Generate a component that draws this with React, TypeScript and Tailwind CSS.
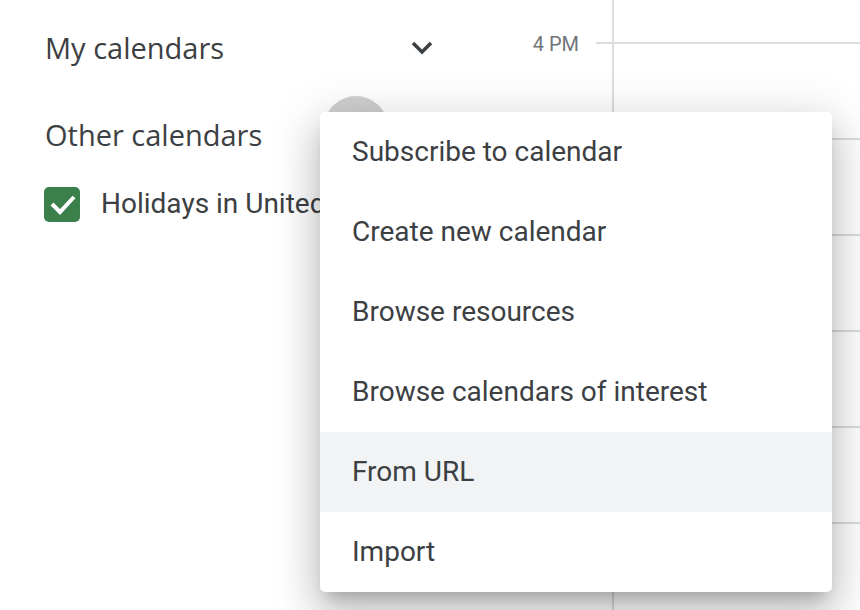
import React from "react";

const hours = ["4 PM", "", "", "", "", "", "10 PM"];
const items = [
  "Subscribe to calendar",
  "Create new calendar",
  "Browse resources",
  "Browse calendars of interest",
  "From URL",
  "Import",
];

export default function App() {
  return (
    <div className="relative w-[860px] h-[610px] overflow-hidden bg-white flex font-['Roboto',sans-serif]">
      {/* Sidebar */}
      <div className="w-[500px] shrink-0 flex flex-col">
        <div className="h-[96px] shrink-0 flex items-center pl-[45px]">
          <span className="flex-1 text-[29px] font-medium text-[#3c4043] font-['Open_Sans',sans-serif]">My calendars</span>
          <div className="w-[64px] h-[64px] mr-[46px] flex items-center justify-center">
            <svg width="24" height="16" viewBox="0 0 24 16">
              <polyline points="3,3 12,12 21,3" fill="none" stroke="#3c4043" strokeWidth="3.5" />
            </svg>
          </div>
        </div>
        <div className="h-[76px] shrink-0 flex items-center pl-[45px] pt-[1px]">
          <span className="text-[29px] font-medium text-[#3c4043] font-['Open_Sans',sans-serif]">Other calendars</span>
        </div>
        <div className="h-[64px] shrink-0 flex items-center pl-[44px] gap-[21px]">
          <div className="w-[36px] h-[35px] rounded-[5px] bg-[#3b7f4a] flex items-center justify-center">
            <svg width="30" height="24" viewBox="0 0 30 24">
              <polyline points="5,12 13,20 27,5" fill="none" stroke="white" strokeWidth="4" />
            </svg>
          </div>
          <span className="text-[28px] text-[#3c4043] whitespace-nowrap">Holidays in United States</span>
        </div>
      </div>

      {/* Time grid */}
      <div className="flex-1 flex flex-col">
        <div className="h-[42px] shrink-0 flex">
          <div className="w-[112px]" />
          <div className="flex-1 border-l-2 border-[#dadce0]" />
        </div>
        {hours.map((h, i) => (
          <div key={i} className="h-[96px] shrink-0 flex">
            <div className="w-[96px] relative">
              {h && (
                <span className="absolute right-[17px] -top-[13px] text-[20px] text-[#70757a] whitespace-nowrap">{h}</span>
              )}
            </div>
            <div className="w-[16px] border-t-2 border-[#dadce0]" />
            <div className="flex-1 border-t-2 border-l-2 border-[#dadce0]" />
          </div>
        ))}
      </div>

      {/* hover circle on add button */}
      <div className="absolute left-[324px] top-[96px] w-[64px] h-[64px] rounded-full bg-[#d0d0d0]" />

      {/* Menu */}
      <div className="absolute left-[320px] top-[112px] w-[512px] rounded-[5px] bg-white shadow-[0_24px_38px_3px_rgba(0,0,0,0.14),0_9px_46px_8px_rgba(0,0,0,0.12),0_11px_15px_-7px_rgba(0,0,0,0.2)] overflow-hidden">
        {items.map((it) => (
          <div
            key={it}
            className={`h-[80px] flex items-center pl-[32px] text-[28px] text-[#3c4043] ${it === "From URL" ? "bg-[#f1f3f4]" : ""}`}
          >
            {it}
          </div>
        ))}
      </div>
    </div>
  );
}
